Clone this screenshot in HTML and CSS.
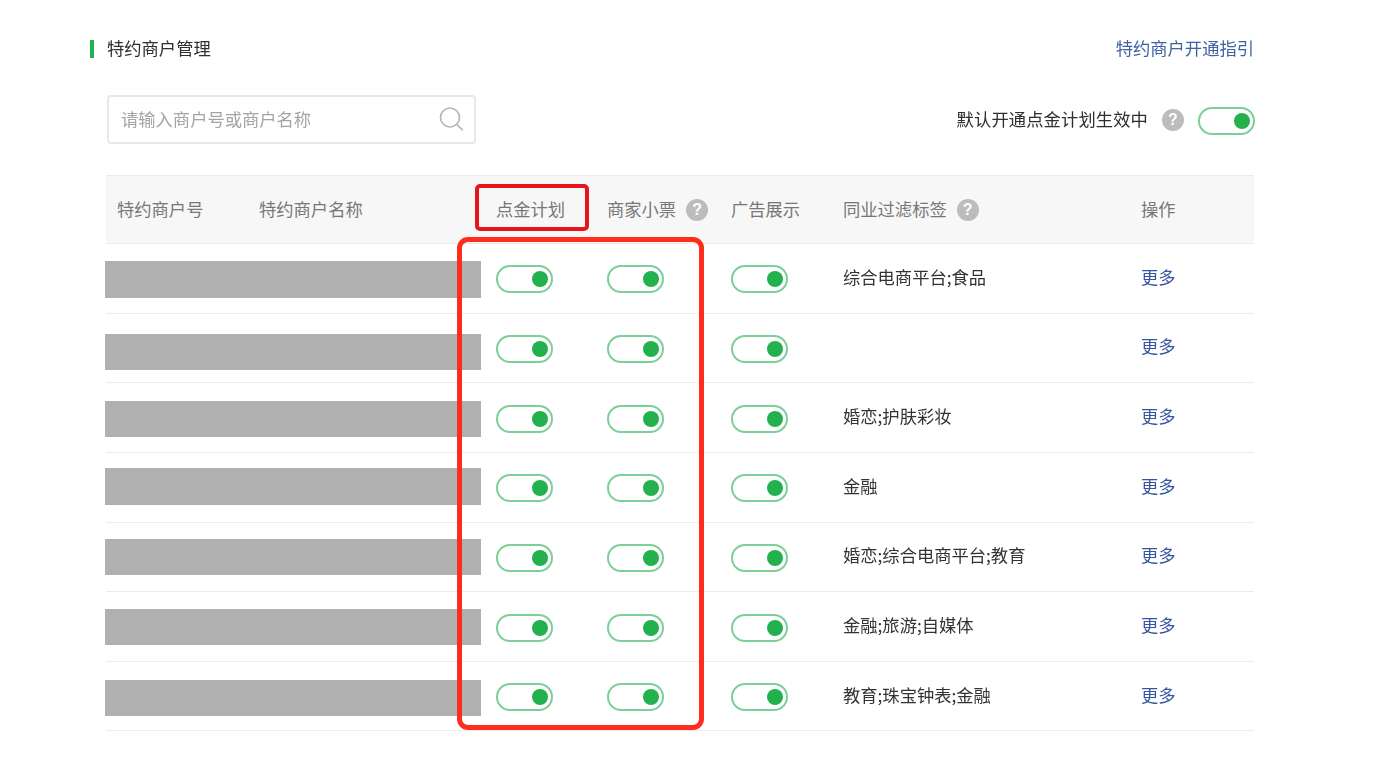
FILE: index.html
```html
<!DOCTYPE html>
<html lang="zh-CN">
<head>
<meta charset="utf-8">
<title>特约商户管理</title>
<link rel="stylesheet" href="styles.css">
</head>
<body>
<main class="page">
  <header class="title-row">
    <h1 class="title">特约商户管理</h1>
    <a class="guide">特约商户开通指引</a>
  </header>
  <section class="tools">
    <div class="search">
      <span class="placeholder">请输入商户号或商户名称</span>
      <svg class="search-icon" width="24" height="24" viewBox="0 0 24 24" fill="none" stroke="#b8b8b8" stroke-width="1.7" stroke-linecap="round"><circle cx="11" cy="10.5" r="9.5"/><path d="M17.8 17.3L23.5 23"/></svg>
    </div>
    <div class="default-open">
      <span class="default-label">默认开通点金计划生效中</span>
      <span class="help">?</span>
      <span class="toggle"></span>
    </div>
  </section>
  <section class="table">
    <div class="row head">
      <div class="cell">特约商户号</div>
      <div class="cell">特约商户名称</div>
      <div class="cell">点金计划</div>
      <div class="cell">商家小票<span class="help">?</span></div>
      <div class="cell">广告展示</div>
      <div class="cell">同业过滤标签<span class="help">?</span></div>
      <div class="cell">操作</div>
    </div>
    <div class="row">
      <div class="mask m1"></div><div class="cell"></div><div class="cell"></div>
      <div class="cell tg"><span class="toggle"></span></div><div class="cell tg"><span class="toggle"></span></div><div class="cell tg"><span class="toggle"></span></div>
      <div class="cell">综合电商平台;食品</div><div class="cell"><a class="more">更多</a></div>
    </div>
    <div class="row">
      <div class="mask m2"></div><div class="cell"></div><div class="cell"></div>
      <div class="cell tg"><span class="toggle"></span></div><div class="cell tg"><span class="toggle"></span></div><div class="cell tg"><span class="toggle"></span></div>
      <div class="cell"></div><div class="cell"><a class="more">更多</a></div>
    </div>
    <div class="row">
      <div class="mask m3"></div><div class="cell"></div><div class="cell"></div>
      <div class="cell tg"><span class="toggle"></span></div><div class="cell tg"><span class="toggle"></span></div><div class="cell tg"><span class="toggle"></span></div>
      <div class="cell">婚恋;护肤彩妆</div><div class="cell"><a class="more">更多</a></div>
    </div>
    <div class="row">
      <div class="mask m4"></div><div class="cell"></div><div class="cell"></div>
      <div class="cell tg"><span class="toggle"></span></div><div class="cell tg"><span class="toggle"></span></div><div class="cell tg"><span class="toggle"></span></div>
      <div class="cell">金融</div><div class="cell"><a class="more">更多</a></div>
    </div>
    <div class="row">
      <div class="mask m5"></div><div class="cell"></div><div class="cell"></div>
      <div class="cell tg"><span class="toggle"></span></div><div class="cell tg"><span class="toggle"></span></div><div class="cell tg"><span class="toggle"></span></div>
      <div class="cell">婚恋;综合电商平台;教育</div><div class="cell"><a class="more">更多</a></div>
    </div>
    <div class="row">
      <div class="mask m6"></div><div class="cell"></div><div class="cell"></div>
      <div class="cell tg"><span class="toggle"></span></div><div class="cell tg"><span class="toggle"></span></div><div class="cell tg"><span class="toggle"></span></div>
      <div class="cell">金融;旅游;自媒体</div><div class="cell"><a class="more">更多</a></div>
    </div>
    <div class="row">
      <div class="mask m7"></div><div class="cell"></div><div class="cell"></div>
      <div class="cell tg"><span class="toggle"></span></div><div class="cell tg"><span class="toggle"></span></div><div class="cell tg"><span class="toggle"></span></div>
      <div class="cell">教育;珠宝钟表;金融</div><div class="cell"><a class="more">更多</a></div>
    </div>
  </section>
  <div class="mark mark-head"></div>
  <div class="mark mark-body"></div>
</main>
</body>
</html>
```
FILE: styles.css
```css
* { box-sizing: border-box; }
html, body { margin: 0; background: #fff; }
body {
  font-family: "Noto Sans CJK SC", "Noto Sans", sans-serif;
  font-size: 17.3px;
  font-weight: 400;
  color: #333;
  overflow: hidden;
}
.page {
  position: relative;
  width: 1382px;
  height: 780px;
  padding: 36px 128px 0 90px;
  filter: blur(0.45px);
}
.title-row {
  display: flex;
  align-items: center;
  justify-content: space-between;
  height: 26px;
}
.title {
  margin: 0;
  padding: 0 0 2px 13px;
  border-left: 4px solid #22b14c;
  font-size: 17.3px;
  font-weight: 400;
  line-height: 16px;
  color: #2e2e2e;
}
.guide { color: #3f63a2; padding-bottom: 4px; }
.tools {
  display: flex;
  align-items: center;
  justify-content: space-between;
  margin: 32px 0 0 17px;
  height: 50px;
}
.search {
  display: flex;
  align-items: center;
  justify-content: space-between;
  width: 369px;
  height: 49px;
  padding: 0 11px 0 12px;
  border: 2px solid #e8e8e8;
  border-radius: 4px;
}
.placeholder { color: #a4a4a4; padding-bottom: 1px; }
.default-open {
  display: flex;
  align-items: center;
  padding-top: 4px;
  margin-right: -1px;
}
.default-label { padding-bottom: 5px; letter-spacing: 0.12px; color: #2e2e2e; }
.default-open .help { margin: 0 14px 2px 14px; }
.help {
  display: inline-flex;
  align-items: center;
  justify-content: center;
  width: 22px;
  height: 22px;
  margin-left: 10px;
  border-radius: 50%;
  background: #bcbcbc;
  color: #fff;
  font-family: "Liberation Sans", sans-serif;
  font-size: 16px;
  font-weight: 700;
}
.toggle {
  position: relative;
  display: block;
  width: 57px;
  height: 28px;
  border: 2px solid #7ccf97;
  border-radius: 14px;
  background: #fff;
}
.toggle::after {
  content: "";
  position: absolute;
  top: 4px;
  right: 3.5px;
  width: 16px;
  height: 16px;
  border-radius: 50%;
  background: #22b14c;
}
.table { margin: 31px 0 0 16px; }
.row {
  position: relative;
  display: grid;
  grid-template-columns: 142px 237px 111px 124px 112px 298px 124px;
  align-items: center;
  height: 69.65px;
  border-bottom: 1px solid #ececec;
  color: #333;
}
.row.head {
  height: 69px;
  border-top: 1px solid #ececec;
  background: #f7f7f7;
  color: #777;
}
.cell {
  display: flex;
  align-items: center;
  padding: 0 0 4px 11px;
  white-space: nowrap;
}
.head .cell { padding-bottom: 2px; }
.cell.tg { padding: 2px 0 0 11px; }
.cell .help { margin-top: 2px; }
.row:not(.head) .cell { min-height: 28px; }
.more { color: #35569f; }
.mask {
  position: absolute;
  left: -1px;
  width: 376px;
  height: 37px;
  background: #b0b0b0;
}
.m1 { top: 17px; }
.m2 { top: 20px; height: 36px; }
.m3 { top: 18px; height: 36px; }
.m4 { top: 15px; }
.m5 { top: 16px; height: 36px; }
.m6 { top: 17px; height: 36px; }
.m7 { top: 18px; height: 36px; }
.mark { position: absolute; }
.mark-head {
  left: 475px;
  top: 184px;
  width: 114px;
  height: 47px;
  border: 4px solid #e8141c;
  border-radius: 5px;
}
.mark-body {
  left: 457px;
  top: 237px;
  width: 247px;
  height: 493px;
  border: 5px solid #ff2d20;
  border-radius: 11px;
}
```
